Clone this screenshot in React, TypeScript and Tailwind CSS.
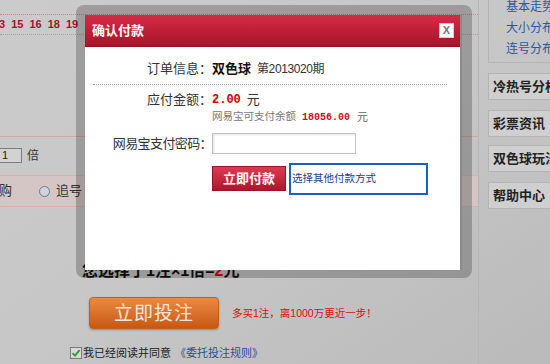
export default function App() {
  return (
    <div className="relative w-[550px] h-[364px] overflow-hidden bg-gradient-to-br from-[#cbcbcb] via-[#c7c7c7] to-[#bababa] font-['Liberation_Sans','Noto_Sans_CJK_SC',sans-serif] text-[#222]">
      {/* background page */}
      <div className="flex h-full">
        <div className="w-[479px] shrink-0 border-r border-[#b6b6b6] h-full flex flex-col">
          <div className="mt-[14px] border-t border-[#c2907a] h-[21px] border-b border-dotted border-b-[#a4a4a4] flex items-center">
            <div className="flex gap-[6px] -ml-[7px] text-[11px] font-bold text-[#a3132d] leading-none">
              <span>13</span>
              <span>15</span>
              <span>16</span>
              <span>18</span>
              <span>19</span>
            </div>
          </div>
          <div className="mt-[101px] border-t border-[#d2a896]" />
          <div className="mt-[11px] flex items-center h-[15px]">
            <div className="-ml-[20px] w-[42px] h-[15px] border border-[#7c7c7c] bg-[#d2d2d2] pl-[21px] text-[11px] leading-[13px] text-[#222]">1</div>
            <span className="ml-[5px] text-[12px] leading-none text-[#333]">倍</span>
          </div>
          <div className="mt-[12px] h-[32px] bg-[#d3c6c4] border-t border-b border-[#d8b2a6] flex items-center text-[13px] text-[#333]">
            <span className="-ml-[1px]">购</span>
            <span className="ml-[27px] w-[11px] h-[11px] rounded-full border-[1.5px] border-[#5b7cb4] bg-[#d4d4d4]" />
            <span className="ml-[6px]">追号</span>
          </div>
          <div className="mt-[56px] ml-[82px] h-[16px] flex items-center text-[16px] font-bold leading-none text-[#111]">
            您选择了<span>1</span>注×<span>1</span>倍=<span className="text-[#d01414]">2</span>元
          </div>
          <div className="mt-[18px] flex items-center">
            <div className="ml-[89px] w-[130px] h-[32px] rounded-[4px] border border-[#c0601e] bg-gradient-to-b from-[#ea8a42] to-[#c85810] shadow-[0_1px_2px_rgba(0,0,0,0.3)] flex items-center justify-center text-[19px] leading-none text-[#f3e6da] tracking-[1px]">
              立即投注
            </div>
            <span className="ml-[13px] text-[10.5px] leading-none text-[#d41010]">多买1注，离1000万更近一步！</span>
          </div>
          <div className="mt-[18px] ml-[70px] flex items-center text-[11px] leading-none">
            <span className="w-[12px] h-[12px] border border-[#7a7a7a] bg-[#d9d9d9] flex items-center justify-center">
              <svg width="10" height="10" viewBox="0 0 10 10">
                <path d="M1.5 5.2 L4 7.6 L8.6 2.2" fill="none" stroke="#2b9a34" strokeWidth="1.8" />
              </svg>
            </span>
            <span className="ml-[1px] text-[#222]">我已经阅读并同意</span>
            <span className="ml-[4px] text-[#2a4f9c]">《委托投注规则》</span>
          </div>
        </div>
        <div className="flex-1 pl-[9px] flex flex-col">
          <div className="-mt-[10px] h-[73px] border border-[#b4b4b4] pl-[17px] pt-[9px] flex flex-col gap-[7px] text-[12px] leading-[14px] text-[#2a56a8] whitespace-nowrap">
            <span>基本走势</span>
            <span>大小分布</span>
            <span>连号分布</span>
          </div>
          <div className="mt-[10px] h-[27px] border border-[#b4b4b4] bg-[#cfcfcf] pl-[4px] flex items-center text-[13px] font-bold text-[#222] whitespace-nowrap">冷热号分析</div>
          <div className="mt-[10px] h-[27px] border border-[#b4b4b4] bg-[#cfcfcf] pl-[4px] flex items-center text-[13px] font-bold text-[#222] whitespace-nowrap">彩票资讯</div>
          <div className="mt-[8px] h-[27px] border border-[#b4b4b4] bg-[#cfcfcf] pl-[4px] flex items-center text-[13px] font-bold text-[#222] whitespace-nowrap">双色球玩法</div>
          <div className="mt-[10px] h-[27px] border border-[#b4b4b4] bg-[#cfcfcf] pl-[4px] flex items-center text-[13px] font-bold text-[#222] whitespace-nowrap">帮助中心</div>
        </div>
      </div>

      {/* modal */}
      <div className="absolute left-[76px] top-[5px] w-[396px] h-[273px] rounded-[8px] bg-[rgba(0,0,0,0.22)] pt-[10px] pl-[9px] pr-[10px] pb-[8px]">
        <div className="w-full h-full bg-white border-r-2 border-[#8a8a8a] flex flex-col">
          <div className="h-[32px] bg-gradient-to-b from-[#d62a45] to-[#a8142c] border-b border-[#8e0f22] flex items-center justify-between pl-[7px] pr-[6px]">
            <span className="text-[13px] font-bold text-white leading-none">确认付款</span>
            <span className="w-[15px] h-[15px] bg-white border border-[#d0d0d0] flex items-center justify-center text-[11px] font-bold text-[#777] leading-none">X</span>
          </div>
          <div className="flex flex-col text-[13px] text-[#333]">
            <div className="mt-[13px] h-[18px] flex items-center">
              <span className="w-[127px] text-right">订单信息：</span>
              <span className="font-bold text-[#111]">双色球</span>
              <span className="ml-[6px] text-[12px] tracking-[-0.4px]">第2013020期</span>
            </div>
            <div className="mt-[6px] mx-[8px] mr-[13px] border-t border-dotted border-[#9a9a9a]" />
            <div className="mt-[6px] h-[18px] flex items-center">
              <span className="w-[127px] text-right">应付金额：</span>
              <span className="font-['Liberation_Mono',monospace] font-bold text-[12px] text-[#cc0000]">2.00</span>
              <span className="ml-[6px]">元</span>
            </div>
            <div className="mt-[1px] h-[14px] flex items-center pl-[127px] text-[10.5px] text-[#777] whitespace-nowrap">
              <span>网易宝可支付余额</span>
              <span className="ml-[6px] font-['Liberation_Mono',monospace] font-bold text-[10px] text-[#c8102a]">18056.00</span>
              <span className="ml-[7px] text-[11px] text-[#666]">元</span>
            </div>
            <div className="mt-[9px] h-[21px] flex items-center">
              <span className="w-[127px] text-right tracking-[-0.6px]">网易宝支付密码：</span>
              <span className="w-[144px] h-[21px] border border-[#c4c4c4] shadow-[inset_1px_1px_2px_rgba(0,0,0,0.12)] bg-white" />
            </div>
            <div className="mt-[9px] flex items-start pl-[127px]">
              <span className="mt-[3px] w-[74px] h-[25px] border border-[#9c1028] bg-gradient-to-b from-[#dc3a52] to-[#b0142e] flex items-center justify-center text-[13px] font-bold text-white leading-none">立即付款</span>
              <span className="ml-[3px] w-[139px] h-[32px] border-2 border-[#1b63b6] pl-[1px] pt-[6px] text-[10.5px] leading-[14px] text-[#1e3c8e] whitespace-nowrap">选择其他付款方式</span>
            </div>
          </div>
        </div>
      </div>
    </div>
  );
}
